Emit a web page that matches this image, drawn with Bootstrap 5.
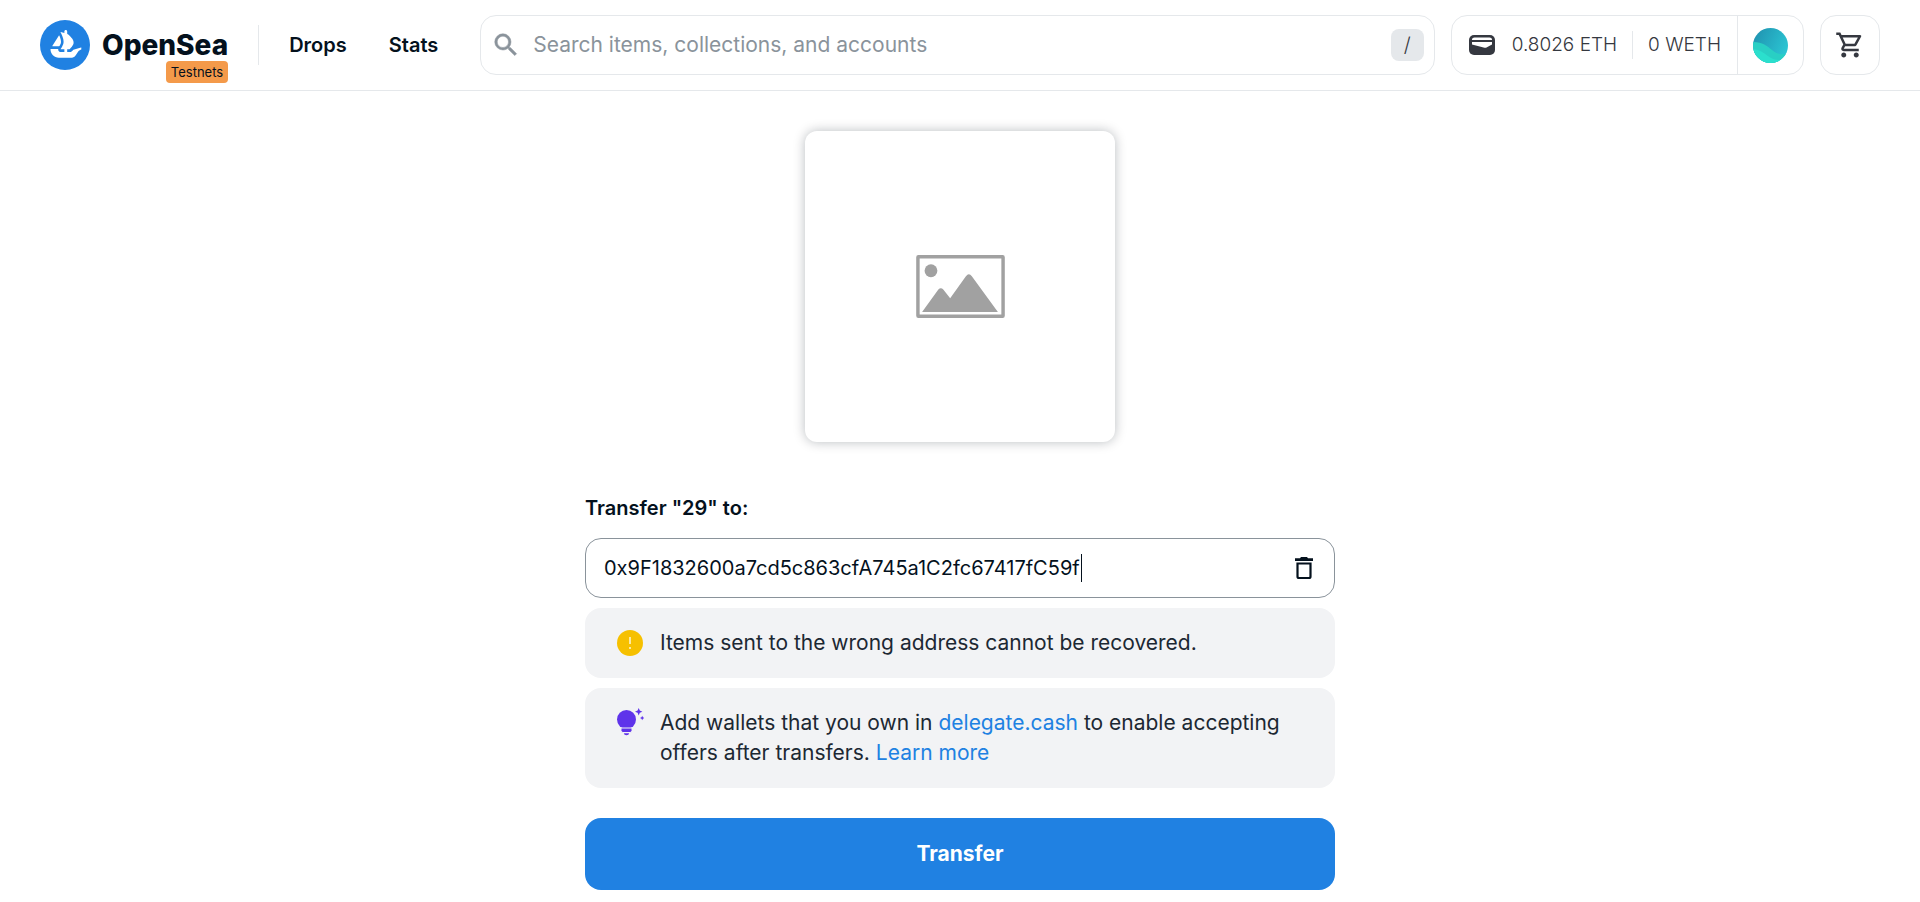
<!DOCTYPE html>
<html lang="en">
<head>
<meta charset="utf-8">
<meta name="viewport" content="width=device-width, initial-scale=1">
<title>Transfer item | OpenSea Testnets</title>
<link href="https://cdn.jsdelivr.net/npm/bootstrap@5.3.0/dist/css/bootstrap.min.css" rel="stylesheet">
<style>
  body { font-family: Inter, "Liberation Sans", sans-serif; font-size: 20px; line-height: 30px; color: #04111d; }
  svg { display: block; flex: none; }
  .topbar { border-bottom: 1px solid #e5e8eb; padding: 15px 40px; }
  .brand { font-weight: 800; font-size: 28px; color: #04111d; gap: 12px; }
  .net-tag { right: 0; top: 41px; background: #f49a4a; color: #04111d; font-size: 13px; font-weight: 400; line-height: 22px; padding: 0 5px; border-radius: 4px; }
  .rule { width: 1px; height: 40px; background: #e5e8eb; margin: 0 30px; }
  .menu { gap: 42px; margin-right: 42px; }
  .menu a { color: #04111d; font-weight: 600; }
  .outlined { border: 1px solid #e5e8eb; border-radius: 16px; height: 60px; background: #fff; }
  .search { padding: 0 10px; }
  .search input { font-size: 21px; color: #04111d; outline: 0; min-width: 0; }
  .search input::placeholder { color: #8a939b; opacity: 1; }
  .slash { width: 33px; height: 32px; border-radius: 8px; background: #e5e8eb; color: #353840; font: inherit; font-weight: 300; }
  .wallet button { color: #353840; font-size: 19px; font-weight: 300; }
  .wallet .thin { width: 1px; height: 28px; background: #e5e8eb; margin: 0 15px; }
  .wallet .avatar-btn { border-left: 1px solid #e5e8eb !important; padding: 0 15px; }
  .cart-btn { width: 60px; color: #353840; }
  .preview { width: 310px; height: 311px; border-radius: 12px; box-shadow: 0 0 12px rgba(4,17,29,.28); margin-top: 40px; }
  .sheet { max-width: 750px; }
  .sheet label { font-weight: 600; margin: 51px 0 15px; }
  .address { border: 1px solid #8a939b; border-radius: 16px; height: 60px; padding: 0 18px; }
  .address input { font-size: 20px; color: #04111d; outline: 0; min-width: 0; }
  .caret { width: 1px; height: 28px; top: 15px; left: 495px; background: #04111d; }
  .note { background: #f2f3f5; border-radius: 16px; padding: 20px 32px; gap: 16px; margin-top: 10px; font-size: 21px; color: #1c2833; }
  .note a { color: #2081e2; text-decoration: none; }
  .go { background: #2081e2; color: #fff; border-radius: 16px; font-weight: 700; font-size: 21px; line-height: 30px; padding: 21px; margin-top: 30px; }
  .go:hover { background: #2081e2; color: #fff; }
</style>
</head>
<body>
<header class="topbar d-flex align-items-center">
  <a href="#" class="brand d-flex align-items-center position-relative text-decoration-none">
    <svg width="50" height="50" viewBox="0 0 90 90"><circle cx="45" cy="45" r="45" fill="#2081e2"/><path fill="#fff" d="M22.203 46.512L22.392 46.206L34.101 27.891C34.272 27.63 34.677 27.657 34.803 27.945C36.756 32.328 38.448 37.782 37.656 41.175C37.323 42.57 36.396 44.46 35.352 46.206C35.217 46.458 35.073 46.71 34.911 46.953C34.839 47.061 34.713 47.124 34.578 47.124H22.545C22.221 47.124 22.032 46.773 22.203 46.512ZM74.376 52.812C74.376 52.983 74.277 53.127 74.133 53.19C73.224 53.577 70.119 55.008 68.832 56.799C65.538 61.38 63.027 67.932 57.402 67.932H33.948C25.632 67.932 18.9 61.173 18.9 52.83V52.56C18.9 52.344 19.08 52.164 19.305 52.164H32.373C32.634 52.164 32.823 52.398 32.805 52.659C32.706 53.505 32.868 54.378 33.273 55.17C34.047 56.745 35.658 57.726 37.395 57.726H43.866V52.677H37.467C37.143 52.677 36.945 52.299 37.134 52.029C37.971 50.823 38.835 49.491 39.699 47.97C40.284 46.944 40.851 45.846 41.31 44.748C41.679 43.794 41.805 43.461 41.895 43.137C42.354 41.364 42.444 40.374 42.444 39.348C42.444 38.943 42.426 38.52 42.39 38.124C42.228 36.414 42.156 36.027 42.084 35.631C41.985 35.046 41.859 34.461 41.715 33.876C40.959 31.203 40.545 29.97 40.095 28.818C39.294 26.82 39.015 26.217 38.763 25.65L37.755 23.544L36.963 22.086C36.855 21.888 37.035 21.645 37.251 21.708L43.866 23.508V20.574C43.866 19.152 45 18 46.413 18C47.115 18 47.754 18.288 48.204 18.756C48.663 19.224 48.951 19.863 48.951 20.574V24.939L49.482 25.083C49.725 25.236 49.914 25.38 50.148 25.56C51.246 26.46 51.822 26.955 52.443 27.522C53.721 28.71 54.621 29.583 55.485 30.555C56.439 31.698 56.7 31.986 56.916 32.274C57.213 32.661 57.519 33.066 57.798 33.489C58.554 34.623 58.86 35.172 59.157 35.721C59.85 37.26 60.111 38.007 60.273 38.763C60.543 40.752 60.507 41.526 60.345 42.3C59.958 43.578 59.85 43.902 59.706 44.217C59.427 44.856 59.103 45.504 58.716 46.098C58.131 47.016 57.96 47.241 57.816 47.457C56.97 48.555 56.772 48.825 56.547 49.068C56.241 49.437 55.944 49.779 55.629 50.112C54.846 50.976 54.639 51.174 54.459 51.354L53.163 52.569C53.091 52.641 52.992 52.677 52.893 52.677H48.951V57.726H53.91C55.017 57.726 56.07 57.339 56.925 56.61C57.213 56.358 58.482 55.26 59.985 53.604C60.039 53.541 60.102 53.505 60.174 53.487L73.863 49.527C74.124 49.455 74.376 49.644 74.376 49.914V52.812Z"/></svg>
    <span>OpenSea</span>
    <span class="net-tag position-absolute">Testnets</span>
  </a>
  <div class="rule"></div>
  <nav class="menu d-flex">
    <a class="text-decoration-none" href="#">Drops</a>
    <a class="text-decoration-none" href="#">Stats</a>
  </nav>
  <div class="search outlined d-flex align-items-center flex-grow-1">
    <svg width="30" height="30" viewBox="0 0 24 24" fill="#8a939b" stroke="#8a939b" stroke-width=".4"><path d="M15.500 14h-.79l-.28-.27A6.470 6.470 0 0 0 16 9.500 6.500 6.500 0 1 0 9.500 16c1.610 0 3.090-.59 4.230-1.570l.27.28v.79l5 4.990L20.490 19zm-6 0C7.010 14 5 11.990 5 9.500S7.010 5 9.500 5 14 7.010 14 9.500 11.990 14 9.500 14"/></svg>
    <input class="border-0 flex-grow-1 bg-transparent p-0 ms-2 ps-1" type="text" aria-label="Search" placeholder="Search items, collections, and accounts">
    <button class="slash border-0 p-0" type="button">/</button>
  </div>
  <div class="wallet outlined d-flex ms-3 overflow-hidden">
    <button class="border-0 bg-transparent d-flex align-items-center py-0 ps-3 pe-3" type="button">
      <svg class="me-3" width="28" height="28" viewBox="0 0 28 28"><rect x="1" y="4" width="26" height="20" rx="5" fill="#353840"/><path d="M4 8.500Q4 6.500 6.500 6.500H21.500Q24 6.500 24 8.500V9H4ZM4 11H24V13.500L18.500 16.500Q17.500 17 16.500 16.700L4 13.500Z" fill="#fff"/></svg>
      <span>0.8026 ETH</span><span class="thin"></span><span>0 WETH</span>
    </button>
    <button class="avatar-btn border-0 bg-transparent" type="button" aria-label="Account">
      <svg width="35" height="35" viewBox="0 0 35 35"><defs><clipPath id="disc"><circle cx="17.500" cy="17.500" r="17.500"/></clipPath><linearGradient id="sea" x1="0" y1="0" x2="1" y2="0.500"><stop offset="0" stop-color="#1f8fae"/><stop offset="1" stop-color="#2bc4d2"/></linearGradient></defs><g clip-path="url(#disc)"><path fill="url(#sea)" d="M0 0H35V35H0z"/><path fill="#29cfc4" d="M0 14C10 14 14 18 19 22S28 27 35 26V35H0z"/><path fill="#2bdfcd" d="M0 21C7 22 11 25 15 28S22 32 28 32V35H0z"/></g></svg>
    </button>
  </div>
  <button class="outlined cart-btn d-flex align-items-center justify-content-center p-0 ms-3" type="button" aria-label="Cart">
    <svg width="30" height="30" viewBox="0 0 24 24" fill="currentColor"><path d="M15.550 13c.75 0 1.410-.41 1.750-1.030l3.580-6.490A.996.996 0 0 0 20.010 4H5.210l-.94-2H1v2h2l3.600 7.590-1.350 2.440C4.520 15.370 5.480 17 7 17h12v-2H7l1.100-2zM6.160 6h12.150l-2.760 5H8.530zM7 18c-1.100 0-1.990.9-1.990 2S5.900 22 7 22s2-.9 2-2-.9-2-2-2m10 0c-1.100 0-1.990.9-1.990 2s.89 2 1.990 2 2-.9 2-2-.9-2-2-2"/></svg>
  </button>
</header>
<main class="sheet mx-auto">
  <div class="preview mx-auto d-flex align-items-center justify-content-center">
    <svg width="89" height="63" viewBox="0 0 90 64"><rect x="1.750" y="1.750" width="86.500" height="60.500" rx=".5" fill="none" stroke="#a1a1a1" stroke-width="3.500"/><circle cx="15" cy="16" r="6.500" fill="#a1a1a1"/><path fill="#a1a1a1" d="M6 58L22.500 35Q25 32.500 27.500 35L34.500 44L50.500 21.500Q53.500 17.500 56.500 21.500L83 58Z"/></svg>
  </div>
  <form>
    <label class="d-block" for="addr">Transfer "29" to:</label>
    <div class="address position-relative d-flex align-items-center">
      <input id="addr" class="border-0 flex-grow-1 bg-transparent p-0" type="text" value="0x9F1832600a7cd5c863cfA745a1C2fc67417fC59f">
      <span class="caret position-absolute"></span>
      <button class="border-0 bg-transparent p-0" type="button" aria-label="Clear address"><svg width="24" height="24" viewBox="0 0 24 24"><path fill="none" stroke="#04111d" stroke-width="2.200" d="M5.500 7.500H18.500V20.500Q18.500 22 17 22H7Q5.500 22 5.500 20.500Z"/><path fill="#04111d" d="M3 2.200H8L9 1H15L16 2.200H21V5H3Z"/></svg></button>
    </div>
    <div class="note d-flex">
      <svg width="27" height="30" viewBox="0 0 27 30"><circle cx="13" cy="15" r="13" fill="#f6c000"/><path fill="#fce9a0" d="M12 9h2v7h-2zM12 19h2v2h-2z"/></svg>
      <div>Items sent to the wrong address cannot be recovered.</div>
    </div>
    <div class="note d-flex">
      <svg width="27" height="30" viewBox="0 0 27 30"><g fill="#5f33ea"><circle cx="9.500" cy="11.500" r="9.500"/><path stroke="#f2f3f5" stroke-width="1" d="M4 20H15V22.500Q15 24.500 13 24.500H6Q4 24.500 4 22.500Z"/><path d="M6.800 25.200h5.400q-.3 2-2.700 2t-2.700-2M21.700 0l1.100 2.600 2.600 1.100-2.600 1.100-1.100 2.600-1.100-2.600-2.600-1.100 2.600-1.100zM25.200 7.800l.7 1.500 1.500.7-1.500.7-.7 1.500-.7-1.500-1.500-.7 1.500-.7z"/></g></svg>
      <div>Add wallets that you own in <a href="#">delegate.cash</a> to enable accepting offers after transfers. <a href="#">Learn more</a></div>
    </div>
    <button class="go btn w-100 border-0" type="button">Transfer</button>
  </form>
</main>
<script src="https://cdn.jsdelivr.net/npm/bootstrap@5.3.0/dist/js/bootstrap.bundle.min.js"></script>
</body>
</html>
